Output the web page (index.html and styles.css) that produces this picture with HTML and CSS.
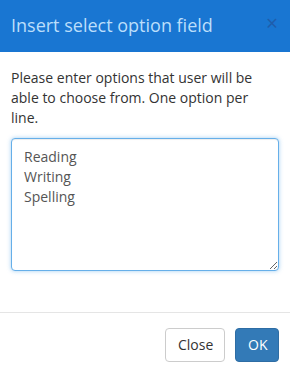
FILE: index.html
```html
<!DOCTYPE html>
<html lang="en">
<head>
    <meta charset="UTF-8">
    <meta name="viewport" content="width=device-width, initial-scale=1.0">
    <title>Insert select option field</title>
    <link rel="stylesheet" href="styles.css">
</head>
<body>
    <div class="modal">
        <div class="modal-header">
            <h4 class="modal-title">Insert select option field</h4>
            <button type="button" class="close-x" aria-label="Close">&times;</button>
        </div>

        <div class="modal-body">
            <p>Please enter options that user will be able to choose from. One option per line.</p>
            <textarea class="options" id="options">Reading
Writing
Spelling</textarea>
        </div>

        <div class="modal-footer">
            <button type="button" class="btn btn-default">Close</button>
            <button type="button" class="btn btn-primary">OK</button>
        </div>
    </div>

    <script>
        const options = document.getElementById('options');
        options.focus();
        options.setSelectionRange(options.value.length, options.value.length);
    </script>
</body>
</html>
```

FILE: styles.css
```css
* {
    margin: 0;
    padding: 0;
    box-sizing: border-box;
    font-family: 'Open Sans', 'Liberation Sans', sans-serif;
}

body {
    background: #ffffff;
    color: #333333;
    font-size: 14px;
    line-height: 20px;
}

.modal {
    width: 290px;
    height: 373px;
    background: #ffffff;
}

.modal-header {
    height: 52px;
    background: #1976d2;
    display: flex;
    align-items: center;
    justify-content: space-between;
    padding: 0 11px 3px 11px;
}

.modal-title {
    color: #bbdefb;
    font-size: 18px;
    font-weight: normal;
    line-height: 26px;
}

.close-x {
    background: none;
    border: none;
    color: #1f5dab;
    font-size: 21px;
    line-height: 20px;
    margin-top: -4px;
    margin-right: 1px;
    cursor: pointer;
}

.modal-body {
    padding: 16px 11px 0 11px;
    height: 260px;
}

.modal-body p {
    width: 250px;
    margin-bottom: 10px;
}

.options {
    display: block;
    width: 268px;
    height: 133px;
    padding: 8px 12px;
    font-size: 14px;
    line-height: 20px;
    color: #555555;
    border: 1px solid #66afe9;
    border-radius: 4px;
    outline: 0;
    box-shadow: inset 0 1px 1px rgba(0, 0, 0, 0.075), 0 0 4px rgba(102, 175, 233, 0.6);
    resize: vertical;
}

.modal-footer {
    border-top: 1px solid #e5e5e5;
    display: flex;
    justify-content: flex-end;
    gap: 10px;
    padding: 15px 11px 0 0;
}

.btn {
    height: 34px;
    padding: 6px 12px;
    font-size: 14px;
    line-height: 20px;
    border-radius: 4px;
    border: 1px solid transparent;
    cursor: pointer;
}

.btn-default {
    width: 60px;
    background: #ffffff;
    border-color: #cccccc;
    color: #333333;
}

.btn-primary {
    width: 44px;
    background: #337ab7;
    border-color: #2e6da4;
    color: #ffffff;
}
```
